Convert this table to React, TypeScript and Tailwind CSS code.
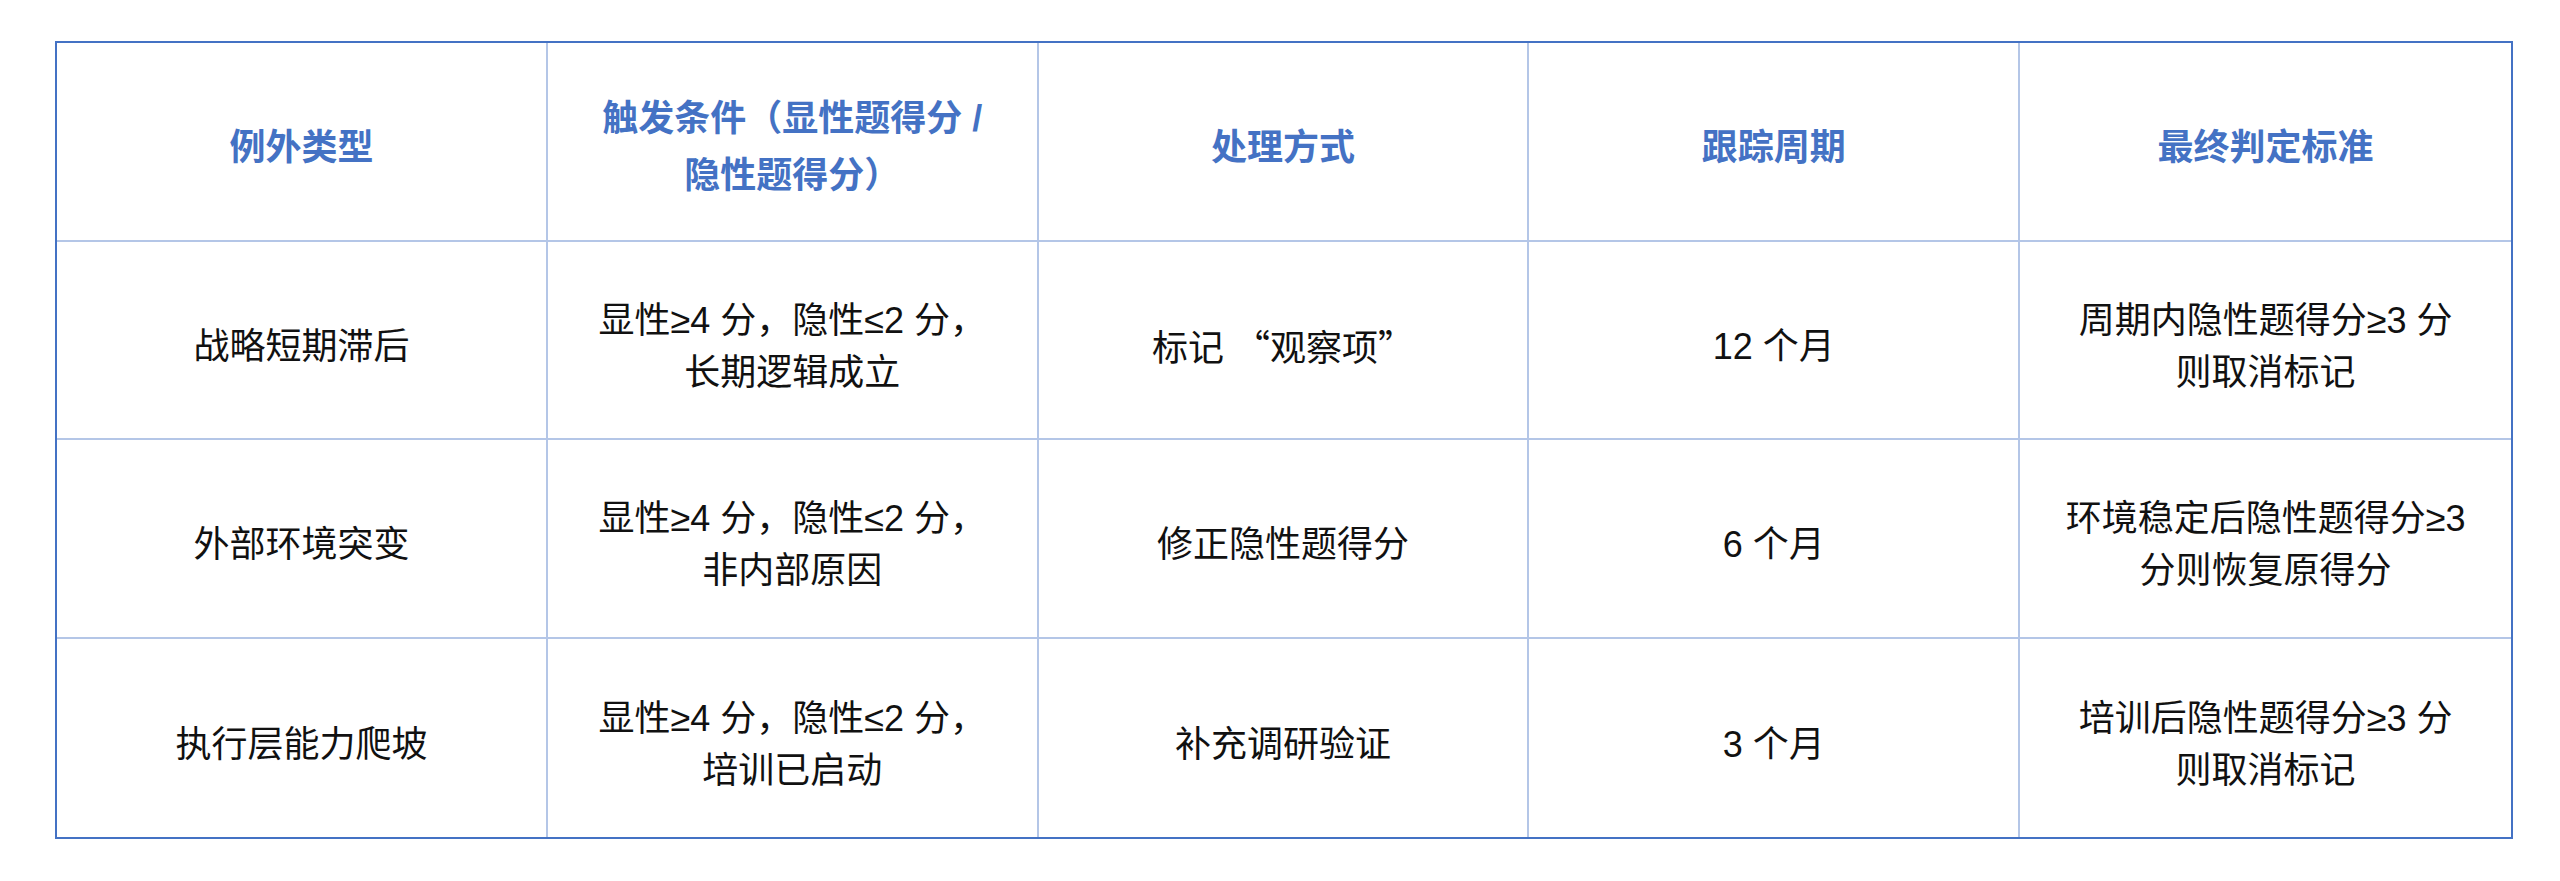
const headers: string[][] = [
  ["例外类型"],
  ["触发条件（显性题得分 /", "隐性题得分）"],
  ["处理方式"],
  ["跟踪周期"],
  ["最终判定标准"],
];

const rows: string[][][] = [
  [
    ["战略短期滞后"],
    ["显性≥4 分，隐性≤2 分，", "长期逻辑成立"],
    ["标记 “观察项”"],
    ["12 个月"],
    ["周期内隐性题得分≥3 分", "则取消标记"],
  ],
  [
    ["外部环境突变"],
    ["显性≥4 分，隐性≤2 分，", "非内部原因"],
    ["修正隐性题得分"],
    ["6 个月"],
    ["环境稳定后隐性题得分≥3", "分则恢复原得分"],
  ],
  [
    ["执行层能力爬坡"],
    ["显性≥4 分，隐性≤2 分，", "培训已启动"],
    ["补充调研验证"],
    ["3 个月"],
    ["培训后隐性题得分≥3 分", "则取消标记"],
  ],
];

// quotes come from the CJK face so they are full width, like the source
function Line({ text }: { text: string }) {
  const parts = text.split(/([“”])/);
  return (
    <span className="whitespace-pre">
      {parts.map((p, i) =>
        p === "“" || p === "”" ? (
          <span key={i} style={{ fontFamily: '"Noto Sans CJK SC", sans-serif' }}>
            {p}
          </span>
        ) : (
          p
        )
      )}
    </span>
  );
}

function Cell({ lines, head, lastCol, lastRow }: { lines: string[]; head?: boolean; lastCol: boolean; lastRow: boolean }) {
  return (
    <div
      className={`h-[198.5px] flex flex-col items-center justify-center text-center text-[36px] border-[#b4c6e7] ${
        lastCol ? "" : "border-r-2"
      } ${lastRow ? "" : "border-b-2"} ${
        head ? "font-bold text-[#4472c4] pt-[12px] leading-[57px]" : "text-[#111111] pt-[14px] leading-[52px]"
      }`}
    >
      {lines.map((l) => (
        <Line key={l} text={l} />
      ))}
    </div>
  );
}

export default function App() {
  return (
    <div
      className="w-[2560px] h-[881px] bg-white pt-[41px] pl-[55px]"
      style={{ fontFamily: '"Liberation Sans", "Noto Sans CJK SC", sans-serif' }}
    >
      <div className="w-[2458px] border-2 border-[#4472c4] grid grid-cols-5">
        {headers.map((h, i) => (
          <Cell key={i} lines={h} head lastCol={i === 4} lastRow={false} />
        ))}
        {rows.map((r, ri) =>
          r.map((c, ci) => (
            <Cell key={`${ri}-${ci}`} lines={c} lastCol={ci === 4} lastRow={ri === rows.length - 1} />
          ))
        )}
      </div>
    </div>
  );
}
